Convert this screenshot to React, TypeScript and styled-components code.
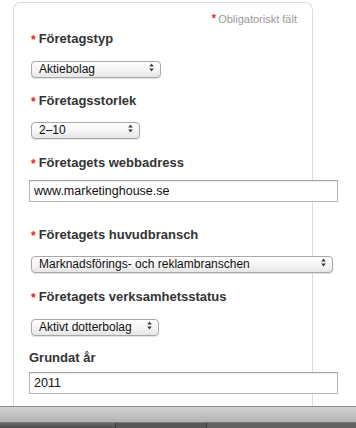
import React from 'react';
import styled, {createGlobalStyle} from 'styled-components';

const GlobalStyle = createGlobalStyle`
    html, body {
        margin: 0;
        padding: 0;
        background: #ffffff;
        font-family: "Liberation Sans", Arial, Helvetica, sans-serif;
    }
`;

const Page = styled.div`
    width: 356px;
    height: 428px;
    display: flex;
    flex-direction: column;
    overflow: hidden;
`;

const Content = styled.div`
    flex: 1;
    min-height: 0;
    padding: 2px 0 0 13px;
`;

const Panel = styled.div`
    width: 268px;
    height: 100%;
    box-sizing: content-box;
    border: 1px solid #dcdcdc;
    border-bottom: none;
    border-radius: 8px 8px 0 0;
    padding: 9px 15px 0 15px;
`;

const RequiredNote = styled.div`
    text-align: right;
    font-size: 11px;
    line-height: 14px;
    height: 14px;
    color: #999999;
    white-space: nowrap;
`;

const Star = styled.span<{ $small?: boolean }>`
    color: #e5231b;
    font-weight: bold;
    font-size: ${p => (p.$small ? '11px' : '12px')};
    margin-right: ${p => (p.$small ? '2px' : '3px')};
    margin-left: ${p => (p.$small ? '0' : '2px')};
    position: relative;
    top: ${p => (p.$small ? '-1px' : '1px')};
`;

const Field = styled.div<{ $top: number; $gap: number }>`
    margin-top: ${p => p.$top}px;
    display: flex;
    flex-direction: column;
    align-items: flex-start;
    gap: ${p => p.$gap}px;
`;

const Label = styled.label`
    font-size: 13px;
    font-weight: bold;
    line-height: 16px;
    height: 16px;
    color: #333333;
    white-space: nowrap;
`;

const SelectWrap = styled.span<{ $width: number }>`
    position: relative;
    display: block;
    margin-left: 2px;
    width: ${p => p.$width}px;
    height: 17px;
`;

const Select = styled.select`
    appearance: none;
    -webkit-appearance: none;
    width: 100%;
    height: 17px;
    box-sizing: border-box;
    margin: 0;
    padding: 0 16px 0 7px;
    border: 1px solid #a8a8a8;
    border-radius: 4px;
    background: linear-gradient(#ffffff, #f3f3f3 60%, #e6e6e6);
    box-shadow: 0 1px 1px rgba(0, 0, 0, 0.12);
    font-family: "Liberation Sans", Arial, Helvetica, sans-serif;
    font-size: 12px;
    line-height: 15px;
    color: #111111;
    outline: none;
`;

const Arrows = styled.svg`
    position: absolute;
    right: 7px;
    top: 4px;
    pointer-events: none;
`;

const TextInput = styled.input<{ $width: number }>`
    width: ${p => p.$width}px;
    height: 22px;
    box-sizing: border-box;
    margin: 0;
    padding: 0 4px;
    border: 1px solid #b4b4b4;
    border-top-color: #a4a4a4;
    box-shadow: inset 0 1px 1px rgba(0, 0, 0, 0.08);
    font-family: "Liberation Sans", Arial, Helvetica, sans-serif;
    font-size: 12.5px;
    color: #111111;
    background: #ffffff;
    outline: none;
`;

const BottomBar = styled.div`
    height: 22px;
    flex-shrink: 0;
    display: flex;
    flex-direction: column;
`;

const BarTop = styled.div`
    height: 15px;
    border-top: 1px solid #8c8c8c;
    background: linear-gradient(#d2d2d2, #c2c2c2 50%, #b3b3b3);
`;

const BarTabs = styled.div`
    flex: 1;
    display: flex;
`;

const BarTab = styled.div<{ $width: number; $bg: string }>`
    width: ${p => p.$width}px;
    flex-shrink: 0;
    background: ${p => p.$bg};
    border-right: 1px solid #3c3c3c;
    border-top: 1px solid #7a7a7a;
    &:last-child {
        flex: 1;
        border-right: none;
    }
`;

const SelectArrows = () => (
    <Arrows width="5" height="9" viewBox="0 0 5 9">
        <path d="M2.5 0.5 L4.8 3.5 L0.2 3.5 Z" fill="#3a3a3a"/>
        <path d="M2.5 8.5 L4.8 5.5 L0.2 5.5 Z" fill="#3a3a3a"/>
    </Arrows>
);

const SelectBox = ({width, value}: { width: number; value: string }) => (
    <SelectWrap $width={width}>
        <Select defaultValue={value}>
            <option>{value}</option>
        </Select>
        <SelectArrows/>
    </SelectWrap>
);

const App: React.FC = () => {
    return (
        <Page>
            <GlobalStyle/>
            <Content>
                <Panel>
                    <RequiredNote><Star $small>*</Star>Obligatoriskt fält</RequiredNote>

                    <Field $top={5} $gap={12}>
                        <Label><Star>*</Star>Företagstyp</Label>
                        <SelectBox width={130} value="Aktiebolag"/>
                    </Field>

                    <Field $top={17} $gap={11}>
                        <Label><Star>*</Star>Företagsstorlek</Label>
                        <SelectBox width={109} value="2–10"/>
                    </Field>

                    <Field $top={18} $gap={9}>
                        <Label><Star>*</Star>Företagets webbadress</Label>
                        <TextInput $width={309} defaultValue="www.marketinghouse.se"/>
                    </Field>

                    <Field $top={25} $gap={11}>
                        <Label><Star>*</Star>Företagets huvudbransch</Label>
                        <SelectBox width={302} value="Marknadsförings- och reklambranschen"/>
                    </Field>

                    <Field $top={18} $gap={12}>
                        <Label><Star>*</Star>Företagets verksamhetsstatus</Label>
                        <SelectBox width={128} value="Aktivt dotterbolag"/>
                    </Field>

                    <Field $top={16} $gap={6}>
                        <Label>Grundat år</Label>
                        <TextInput $width={309} defaultValue="2011"/>
                    </Field>
                </Panel>
            </Content>
            <BottomBar>
                <BarTop/>
                <BarTabs>
                    <BarTab $width={115} $bg="linear-gradient(#6a6a6a, #4c4c4c)"/>
                    <BarTab $width={90} $bg="#575757"/>
                    <BarTab $width={0} $bg="#626262"/>
                </BarTabs>
            </BottomBar>
        </Page>
    );
};

export default App;
